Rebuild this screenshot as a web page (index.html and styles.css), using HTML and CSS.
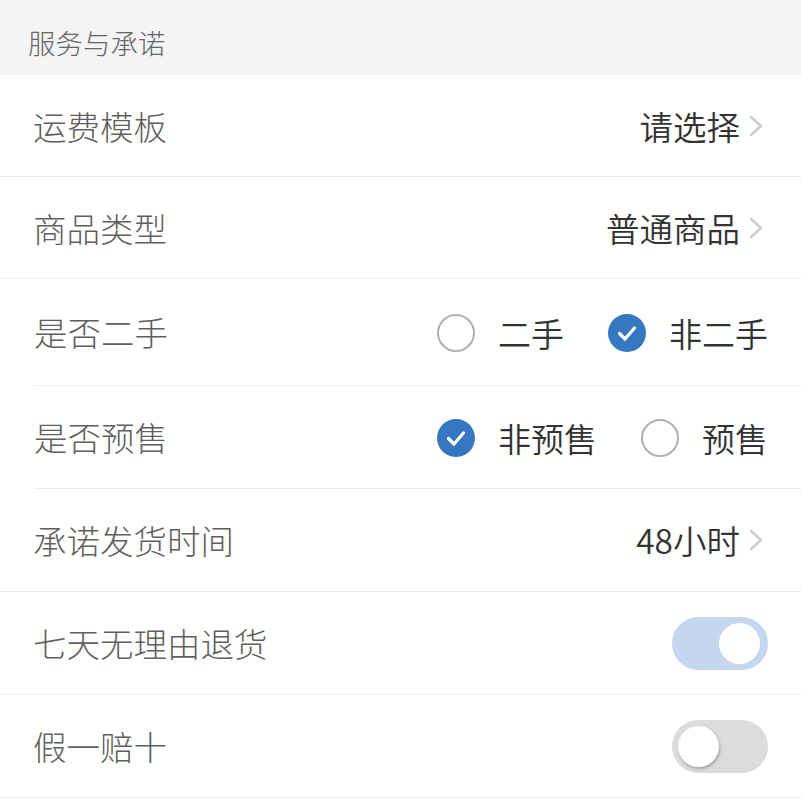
FILE: index.html
```html
<!DOCTYPE html>
<html lang="zh-CN">
<head>
<meta charset="utf-8">
<title>服务与承诺</title>
<link rel="stylesheet" href="styles.css">
</head>
<body>
<div class="page">
  <div class="section-title">服务与承诺</div>
  <div class="list">
    <div class="row short">
      <span class="label">运费模板</span>
      <span class="value">请选择<svg class="chev" viewBox="0 0 16 24"><polyline points="3,3 13,12 3,21"/></svg></span>
    </div>
    <div class="row short">
      <span class="label">商品类型</span>
      <span class="value">普通商品<svg class="chev" viewBox="0 0 16 24"><polyline points="3,3 13,12 3,21"/></svg></span>
    </div>
    <div class="row inset tall">
      <span class="label">是否二手</span>
      <div class="radios">
        <span class="opt"><span class="radio"></span>二手</span>
        <span class="opt"><span class="radio on"><svg viewBox="0 0 38 38"><polyline points="11.5,19.5 17,25 26.5,14"/></svg></span>非二手</span>
      </div>
    </div>
    <div class="row inset">
      <span class="label">是否预售</span>
      <div class="radios">
        <span class="opt"><span class="radio on"><svg viewBox="0 0 38 38"><polyline points="11.5,19.5 17,25 26.5,14"/></svg></span>非预售</span>
        <span class="opt"><span class="radio"></span>预售</span>
      </div>
    </div>
    <div class="row">
      <span class="label">承诺发货时间</span>
      <span class="value">48小时<svg class="chev" viewBox="0 0 16 24"><polyline points="3,3 13,12 3,21"/></svg></span>
    </div>
    <div class="row">
      <span class="label">七天无理由退货</span>
      <span class="switch on"><span class="knob"></span></span>
    </div>
    <div class="row">
      <span class="label">假一赔十</span>
      <span class="switch"><span class="knob"></span></span>
    </div>
  </div>
</div>
</body>
</html>
```

FILE: styles.css
```css
* { box-sizing: border-box; }
html, body {
  margin: 0;
  padding: 0;
  background: #ffffff;
}
body {
  font-family: "Noto Sans CJK SC", "Noto Sans", "Liberation Sans", sans-serif;
}
.page {
  width: 801px;
}
.section-title {
  height: 75px;
  background: #f4f4f4;
  color: #666666;
  font-size: 27.5px;
  font-weight: 300;
  line-height: 1;
  display: flex;
  align-items: center;
  padding-left: 28px;
  padding-top: 10px;
}
.list {
  background: #ffffff;
}
.row {
  height: 103px;
  display: flex;
  align-items: center;
  justify-content: space-between;
  padding: 0 33px 0 33px;
  border-bottom: 1px solid #ececec;
}
.row.short {
  height: 102px;
}
.row.tall {
  height: 107px;
}
.row.inset {
  margin-left: 34px;
  padding-left: 0;
}
.label {
  font-size: 33.5px;
  font-weight: 300;
  line-height: 1;
  color: #5f5f5f;
}
.value {
  display: flex;
  align-items: center;
  font-size: 33.5px;
  font-weight: 350;
  line-height: 1;
  color: #333333;
}
.chev {
  width: 16px;
  height: 24px;
  margin-left: 8px;
  margin-right: 4px;
  fill: none;
  stroke: #cccccc;
  stroke-width: 2.4;
  stroke-linecap: round;
  stroke-linejoin: round;
}
.radios {
  display: flex;
  align-items: center;
  gap: 44px;
  margin-top: 2px;
}
.opt {
  display: flex;
  align-items: center;
  gap: 23px;
  font-size: 33px;
  font-weight: 350;
  line-height: 1;
  color: #333333;
}
.radio {
  width: 38px;
  height: 38px;
  border-radius: 50%;
  border: 2px solid #b0b0b0;
  display: flex;
  align-items: center;
  justify-content: center;
}
.radio.on {
  border: none;
  background: #3577c0;
}
.radio svg {
  width: 38px;
  height: 38px;
  fill: none;
  stroke: #ffffff;
  stroke-width: 3.2;
  stroke-linecap: round;
  stroke-linejoin: round;
}
.switch {
  width: 96px;
  height: 53px;
  border-radius: 27px;
  background: #dcdcdc;
  display: flex;
  align-items: center;
  padding: 0 6px;
}
.switch.on {
  background: #c4d7ef;
  justify-content: flex-end;
  padding: 0 8px;
}
.knob {
  width: 41px;
  height: 41px;
  border-radius: 50%;
  background: #ffffff;
}
.switch .knob {
  box-shadow: 1px 2px 3px rgba(0, 0, 0, 0.25);
}
.switch.on .knob {
  box-shadow: none;
}
```
